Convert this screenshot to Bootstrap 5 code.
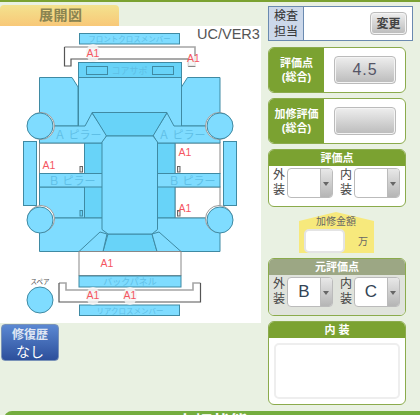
<!DOCTYPE html>
<html lang="ja">
<head>
<meta charset="utf-8">
<title>展開図</title>
<link rel="stylesheet" href="https://cdn.jsdelivr.net/npm/bootstrap@5.3.0/dist/css/bootstrap.min.css">
<style>
html,body{height:415px;overflow:hidden}
body{background:#e9f1e2;font-family:"Liberation Sans","Noto Sans CJK JP",sans-serif;color:#444;border-top:2px solid #7ba231;position:relative}
.stage{height:409px;overflow:hidden}
.leftpane{width:261px}
.righttab{width:119px;height:21px;margin-top:3px;font-size:14px;font-weight:700;color:#8a8450;background:linear-gradient(#f3e28e,#f8c878);border-radius:4px 4px 0 0;padding-left:39px;line-height:21px;letter-spacing:.5px}
.figure{display:block;width:261px;height:297px;background:#fff}
.figure .p{fill:#7fdcff;stroke:#3f8aa3;stroke-width:1}
.figure .d{fill:#68d3f8;stroke:#3f8aa3;stroke-width:1}
.figure .w{fill:#fff;stroke:#888;stroke-width:1}
.figure .ring{fill:#fff;stroke:#999;stroke-width:1}
.figure .kd{fill:none;stroke:#555;stroke-width:1.2}
.figure .kg{fill:none;stroke:#a5a5a5;stroke-width:1.6}
.figure .t{font-size:7.5px;fill:#5fbfe6;text-anchor:middle}
.figure .t2{font-size:9px;fill:#5fbfe6;text-anchor:middle}
.figure .t3{font-size:11px;fill:#5fbfe6;text-anchor:middle}
.figure .sp{font-size:6.5px;fill:#555;text-anchor:middle}
.figure .a{font-size:10.5px;fill:#f5555f;text-anchor:middle}
.figure .v{font-size:14.500px;fill:#555}
.figure .hl{fill:#f4f4f4;opacity:.85}
.figure .g0{fill:#e8e8e8;stroke:#666;stroke-width:1}
.repairbtn{width:58px;height:37px;margin:1px 0 0 1px;padding:2px 0 0;border:1px solid #7a93b8;border-radius:4px;background:linear-gradient(#5b88d2,#2c4f9b);color:#fff;font-size:14px;line-height:17px;display:block;text-align:center}
.repairbtn b{display:block;font-size:12px;font-weight:700;color:#dfe6f3}
.rightpane{width:145px;margin-left:7px;padding-top:4px}
.inspect{height:35px;border:1px solid #6a8ab0;background:#fff;margin-bottom:6px}
.inspect-l{width:35px;background:#ccd8ea;border-right:1px solid #6a8ab0;font-size:12px;line-height:16px;color:#333;text-align:center;padding-top:1px}
.graybtn{background:linear-gradient(#eee,#bbb);border:1px solid #bbb;border-radius:4px;color:#444;box-shadow:inset 0 0 0 1px #f4f4f4;padding:0}
.chg{width:37px;height:23px;font-size:12px;font-weight:700;line-height:20px;margin:0 5px 0 auto}
.scorebox{width:138px;height:46px;border:1px solid #8bab4c;border-radius:6px;background:#fff;overflow:hidden;margin-bottom:5px}
.scorebox-l{width:55px;background:#7ba231;color:#fff;font-size:11px;font-weight:700;line-height:14px;text-align:center}
.scorebtn{width:62px;height:28px;font-size:16px;line-height:24px;letter-spacing:1px;margin-left:10px;color:#556}
.panelbox{width:138px;border:1px solid #8bab4c;border-radius:6px;background:#fff;overflow:hidden;margin-bottom:5px}
.panelhead{height:16px;background:#7ba231;color:#fff;font-size:11px;font-weight:700;line-height:16px;text-align:center}
.panelhead.olive{background:#9ca784}
.panelbody{height:40px;padding:2px 6px 0 4px}
.panelbody.olive{background:#e0e3dc}
.tate{width:14px;font-size:12px;line-height:15px;color:#444}
.sel{width:46px;height:30px;background:#fff;border:1px solid #bbb;border-radius:4px;overflow:hidden;font-size:17px;color:#345;line-height:28px;text-align:center}
.sel-v{flex:1}
.sel-a{width:12px;background:linear-gradient(#e8e8e8,#b5b5b5);border-left:1px solid #bbb;position:relative}
.sel-a::after{content:"";position:absolute;left:2px;top:13px;border:3px solid transparent;border-top:4px solid #666}
.gap6{gap:7px}
.kashu{width:75px;height:41px;margin:1px 0 5px 31px;background:#f7e97c;clip-path:polygon(0 9px,37px 0,75px 9px,75px 100%,0 100%);padding:3px 6px 0 5px;font-size:10px;color:#666;line-height:14px;text-align:center}
.kashu-in{width:41px;height:24px;background:#fff;border:2px solid #e4e4e4;border-radius:5px;display:block}
.kashu-unit{margin-bottom:4px}
.naisou{height:56px;margin:5px;border:2px solid #eee;border-radius:5px;background:#fff}
.footbar{position:absolute;left:4px;right:0;top:409px;height:20px;background:#74ad3f;border-radius:8px 0 0 0;color:#fff;text-align:center;font-size:18px;font-weight:700;line-height:24px}
</style>
</head>
<body>
<div class="stage d-flex">
  <div class="leftpane flex-shrink-0">
    <div class="righttab">展開図</div>
    <svg class="figure" viewBox="0 26 261 297" xmlns="http://www.w3.org/2000/svg">
      <text class="v" x="197" y="39">UC/VER3</text>
      <rect class="p" x="79.500" y="33.500" width="100" height="10.500"/>
      <text class="t" x="129.500" y="42">フロントクロスメンバー</text>
      <path class="kg" d="M64.500 47H195V66H188.500"/>
      <path class="kd" d="M195 66H188.500V59H71V66H64.500V47"/>
      <path class="p" d="M39.500 77.500H72L78 87V126H39.500Z"/>
      <path class="p" d="M220 77.500H187.500L181.500 87V126H220Z"/>
      <rect class="p" x="78.500" y="62.500" width="103" height="70"/>
      <rect class="d" x="78.500" y="62.500" width="103" height="15"/>
      <rect class="d" x="86.500" y="66.500" width="21" height="8"/>
      <rect class="d" x="152.500" y="66.500" width="21" height="8"/>
      <text class="t2" x="129.500" y="74">コアサポ</text>
      <rect class="w" x="39.500" y="143" width="45" height="30.500"/>
      <rect class="w" x="175" y="143" width="45" height="30.500"/>
      <rect class="p" x="39.500" y="187" width="45" height="31"/>
      <rect class="w" x="175" y="187" width="45" height="31"/>
      <rect class="d" x="84.500" y="143" width="18" height="75"/>
      <rect class="d" x="157" y="143" width="18" height="75"/>
      <path class="p" d="M39.500 126H85L92 113L107 135L102 143H39.500Z"/>
      <path class="p" d="M220 126H174L167 113L153 135L157.500 143H220Z"/>
      <path class="d" d="M92 112.500H167L153 136H106.500Z"/>
      <rect class="p" x="39.500" y="173.500" width="63" height="13.500"/>
      <rect class="p" x="157" y="173.500" width="63" height="13.500"/>
      <path class="p" d="M39.500 218H220V251.500H39.500Z"/>
      <path class="d" d="M108 234H152L157 251.500H103Z"/>
      <path class="p" d="M100 232L107 234L103 251.500H79Z"/>
      <path class="p" d="M159 232L152 234L157 251.500H181Z"/>
      <path class="p" d="M106.500 136H153L157.500 142V229.500L152 234H108L102 229.500V142Z"/>
      <rect class="w" x="79" y="251.500" width="102" height="24"/>
      <rect class="p" x="79" y="276" width="102" height="11"/>
      <path class="kg" d="M59 283H66V290H193V283H200.500"/>
      <path class="kd" d="M200.500 283V302H59V283"/>
      <rect class="p" x="79.500" y="305" width="100" height="10.500"/>
      <rect class="p" x="23.500" y="141.500" width="13" height="64"/>
      <rect class="p" x="223.500" y="141.500" width="13" height="64"/>
      <circle class="ring" cx="41" cy="126" r="13.500"/><circle class="ring" cx="219" cy="126" r="13.500"/>
      <circle class="ring" cx="41" cy="219" r="13.500"/><circle class="ring" cx="219" cy="219" r="13.500"/>
      <circle class="p" cx="40" cy="126" r="13"/><circle class="p" cx="220" cy="126" r="13"/>
      <circle class="p" cx="40" cy="220" r="13"/><circle class="p" cx="220" cy="220" r="13"/>
      <circle class="p" cx="40" cy="300" r="13"/>
      <rect class="g0" x="80" y="166.500" width="2.500" height="5.500"/>
      <rect class="g0" x="177.500" y="166.500" width="2.500" height="5.500"/>
      <rect class="d" x="80" y="210.500" width="2.500" height="5.500"/>
      <rect class="g0" x="177.500" y="210.500" width="2.500" height="5.500"/>
      <text class="t3" x="78" y="139">Ａ ピラー</text>
      <text class="t3" x="182" y="139">Ａ ピラー</text>
      <text class="t3" x="72" y="185">Ｂ ピラー</text>
      <text class="t3" x="192" y="185">Ｂ ピラー</text>
      <text class="t2" x="130" y="285">バックパネル</text>
      <text class="t" x="130" y="314">リアクロスメンバー</text>
      <text class="sp" x="40" y="284">スペア</text>
      <ellipse class="hl" cx="93" cy="53" rx="7" ry="9"/>
      <rect class="hl" x="188" y="56" width="8" height="10"/>
      <ellipse class="hl" cx="93" cy="296" rx="7" ry="9"/>
      <ellipse class="hl" cx="130" cy="296" rx="7" ry="9"/>
      <text class="a" x="93" y="57">A1</text>
      <text class="a" x="193.500" y="62">A1</text>
      <text class="a" x="49" y="169">A1</text>
      <text class="a" x="185" y="156">A1</text>
      <text class="a" x="185" y="212">A1</text>
      <text class="a" x="107" y="267">A1</text>
      <text class="a" x="93" y="299">A1</text>
      <text class="a" x="130" y="299">A1</text>
    </svg>
    <button class="btn repairbtn" type="button"><b>修復歴</b>なし</button>
  </div>
  <div class="rightpane flex-shrink-0">
    <div class="inspect d-flex align-items-center">
      <div class="inspect-l align-self-stretch">検査<br>担当</div>
      <button class="btn graybtn chg" type="button">変更</button>
    </div>
    <div class="scorebox d-flex align-items-center">
      <div class="scorebox-l align-self-stretch d-flex align-items-center justify-content-center"><span>評価点<br>(総合)</span></div>
      <button class="btn graybtn scorebtn" type="button">4.5</button>
    </div>
    <div class="scorebox d-flex align-items-center">
      <div class="scorebox-l align-self-stretch d-flex align-items-center justify-content-center"><span>加修評価<br>(総合)</span></div>
      <button class="btn graybtn scorebtn" type="button"></button>
    </div>
    <div class="panelbox">
      <div class="panelhead">評価点</div>
      <div class="panelbody d-flex gap6">
        <div class="d-flex"><div class="tate">外<br>装</div><div class="sel d-flex"><span class="sel-v"></span><span class="sel-a"></span></div></div>
        <div class="d-flex"><div class="tate">内<br>装</div><div class="sel d-flex"><span class="sel-v"></span><span class="sel-a"></span></div></div>
      </div>
    </div>
    <div class="kashu">加修金額<div class="d-flex align-items-end justify-content-between"><span class="kashu-in"></span><span class="kashu-unit">万</span></div></div>
    <div class="panelbox">
      <div class="panelhead olive">元評価点</div>
      <div class="panelbody olive d-flex gap6">
        <div class="d-flex"><div class="tate">外<br>装</div><div class="sel d-flex"><span class="sel-v">B</span><span class="sel-a"></span></div></div>
        <div class="d-flex"><div class="tate">内<br>装</div><div class="sel d-flex"><span class="sel-v">C</span><span class="sel-a"></span></div></div>
      </div>
    </div>
    <div class="panelbox">
      <div class="panelhead">内 装</div>
      <div class="naisou"></div>
    </div>
  </div>
</div>
<div class="footbar">車輌状態</div>
<script src="https://cdn.jsdelivr.net/npm/bootstrap@5.3.0/dist/js/bootstrap.bundle.min.js"></script>
</body>
</html>
